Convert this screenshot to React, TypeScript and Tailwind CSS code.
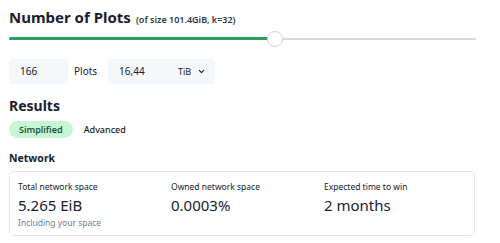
import { FiChevronDown } from 'react-icons/fi';

const stats = [
  { label: 'Total network space', value: '5.265 EiB', note: 'Including your space' },
  { label: 'Owned network space', value: '0.0003%' },
  { label: 'Expected time to win', value: '2 months' },
];

export default function App() {
  return (
    <div
      className="w-[500px] h-[243px] bg-white text-[#1a202c] px-[9px] pt-[6px] overflow-hidden"
      style={{ fontFamily: '"Noto Sans", "Open Sans", sans-serif' }}
    >
      {/* Title */}
      <div className="flex items-baseline gap-[5px]">
        <h1 className="text-[15px] font-bold leading-[22px]">Number of Plots</h1>
        <span className="text-[9px] font-semibold text-[#2d3748]">(of size 101.4GiB, k=32)</span>
      </div>

      {/* Slider */}
      <div className="relative h-[16px] mt-[3px] w-[467px] flex items-center">
        <div className="h-[2px] w-full bg-[#d9d9d9] rounded" />
        <div className="absolute left-0 top-[6px] h-[3px] w-[260px] bg-[#2f9a5c] rounded" />
        <div className="absolute left-[258px] top-0 w-[16px] h-[16px] rounded-full bg-white border border-[#cbd5e0]" />
      </div>

      {/* Inputs */}
      <div className="flex items-center mt-[12px] h-[25px]">
        <div className="w-[59px] h-[25px] bg-[#f5f8fb] rounded-[4px] flex items-center pl-[11px] text-[10px]">
          166
        </div>
        <span className="ml-[6px] text-[10px]">Plots</span>
        <div className="ml-[11px] w-[107px] h-[25px] bg-[#f5f8fb] rounded-[4px] flex items-center pl-[11px] pr-[9px] text-[10px]">
          <span className="flex-1">16,44</span>
          <span className="text-[9px] mr-[6px]">TiB</span>
          <FiChevronDown className="w-[9px] h-[9px]" strokeWidth={3} />
        </div>
      </div>

      {/* Results */}
      <h2 className="text-[14px] font-bold leading-[20px] mt-[12px]">Results</h2>
      <div className="flex items-center gap-[11px] mt-[5px]">
        <span className="px-[10px] h-[17px] rounded-full bg-[#c6f6d5] text-[#22543d] text-[9px] font-semibold flex items-center">
          Simplified
        </span>
        <span className="text-[9px] font-medium">Advanced</span>
      </div>

      {/* Network */}
      <h3 className="text-[10.5px] font-bold mt-[12px] leading-[16px]">Network</h3>
      <div className="mt-[5px] w-[466px] h-[65px] border border-[#e2e8f0] rounded-[4px] grid grid-cols-[153px_153px_153px] px-[8px] pt-[8px]">
        {stats.map((s) => (
          <div key={s.label} className="flex flex-col">
            <span className="text-[8.5px] leading-[13px]">{s.label}</span>
            <span className="text-[15px] leading-[24px]">{s.value}</span>
            {s.note && <span className="text-[8.5px] text-[#718096] leading-[12px]">{s.note}</span>}
          </div>
        ))}
      </div>
    </div>
  );
}
